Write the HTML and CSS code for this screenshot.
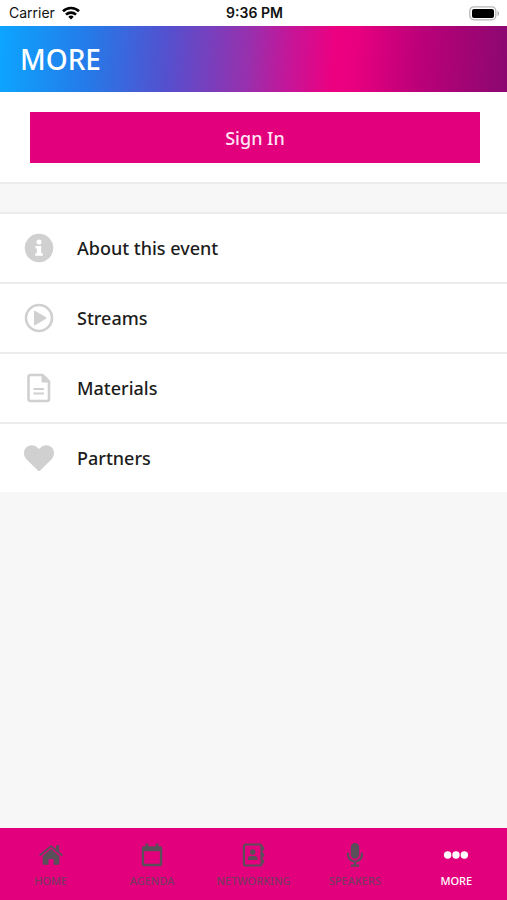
FILE: index.html
```html
<!DOCTYPE html>
<html lang="en">
<head>
<meta charset="utf-8">
<meta name="viewport" content="width=device-width, initial-scale=1">
<title>More</title>
<link rel="stylesheet" href="styles.css">
</head>
<body>
<div class="status">
  <div class="carrier"><span>Carrier</span>
    <svg width="18" height="14" viewBox="0 0 18 14" fill="none" stroke="#000" stroke-width="2.6" aria-hidden="true"><path d="M1 5.2a11.5 11.5 0 0 1 16 0M4 8.6a7.2 7.2 0 0 1 10 0"/><path d="M9 13.5L6.3 10.8a3.9 3.9 0 0 1 5.4 0z" fill="#000" stroke="none"/></svg>
  </div>
  <time>9:36 PM</time>
  <svg class="battery" width="31" height="15" viewBox="0 0 31 15" aria-hidden="true"><rect x=".8" y=".8" width="26" height="13" rx="4" fill="#fff" stroke="#b8b8b8" stroke-width="1.3"/><rect x="3" y="3" width="22" height="9" rx="2" fill="#000"/><path d="M28.5 5c2 .8 2 4.2 0 5z" fill="#aaa"/></svg>
</div>
<header class="title-bar"><h1>MORE</h1></header>
<main>
  <section class="account"><button class="sign-in" type="button">Sign In</button></section>
  <nav class="menu" aria-label="Event">
    <a href="#about"><svg viewBox="0 0 32 32" fill="#d0d0d0" aria-hidden="true"><circle cx="16" cy="16" r="14.3"/><g fill="#fff"><circle cx="16" cy="10" r="2.5"/><path d="M12.5 14h5.7v7.2h1.6v2.6h-7.6v-2.6h1.7v-4.6h-1.4z"/></g></svg>About this event</a>
    <a href="#streams"><svg viewBox="0 0 32 32" fill="#d0d0d0" aria-hidden="true"><circle cx="16" cy="16" r="13" fill="none" stroke="#d0d0d0" stroke-width="2.6"/><path d="M11 9.5q0-1.2 1-.7l11 6.4q1 .8 0 1.6l-11 6.4q-1 .5-1-.7z"/></svg>Streams</a>
    <a href="#materials"><svg viewBox="0 0 32 32" fill="none" stroke="#d0d0d0" stroke-width="2.6" aria-hidden="true"><path d="M7.5 3H19.500L26 9.500V27q0 2-2 2H7.500q-2 0-2-2V5q0-2 2-2z" stroke-linejoin="round"/><path d="M19 3v7h7z" fill="#d0d0d0" stroke-width="1"/><path d="M10.500 17h10.500M10.500 21.500h10.500" stroke-width="2.200"/></svg>Materials</a>
    <a href="#partners"><svg viewBox="0 0 32 32" fill="#d0d0d0" aria-hidden="true"><path d="M14.9 28.5L3.400 17.200C-.3 13.200.3 7 4.500 4.500c3.500-2.100 7.800-1.300 10.300 1.400L16 7l1.200-1.100c2.500-2.700 6.800-3.500 10.300-1.400 4.200 2.500 4.800 8.700 1.100 12.700L17.100 28.500q-1.100 1-2.200 0z"/></svg>Partners</a>
  </nav>
</main>
<nav class="tabs" aria-label="Main">
  <a href="#home"><svg viewBox="0 0 28 28" fill="currentColor" aria-hidden="true"><path d="M14 7.500l9 7.500v8.500q0 .9-.9.900h-5.300v-6.200h-5.400v6.200H5.900q-.9 0-.9-.9V15z"/><path d="M1.800 14.500L14 4.400l12.200 10.100" fill="none" stroke="currentColor" stroke-width="2"/><path d="M19.500 3.500h3.300v8l-3.300-2.700z"/></svg>HOME</a>
  <a href="#agenda"><svg viewBox="0 0 28 28" fill="currentColor" aria-hidden="true"><path fill-rule="evenodd" d="M7 1.500h3v3h8v-3h3v3h2q2 0 2 2V24q0 2-2 2H5q-2 0-2-2V6.500q0-2 2-2h2zM5.500 10v13q0 .5.500.5h16q.5 0 .5-.5V10z"/></svg>AGENDA</a>
  <a href="#networking"><svg viewBox="0 0 28 28" fill="currentColor" aria-hidden="true"><rect x="4.200" y="2.700" width="19" height="22.600" rx="2" fill="none" stroke="currentColor" stroke-width="2.400"/><circle cx="13.700" cy="10.700" r="3"/><path d="M8.500 19.500v-1.300q0-3 3-3h4.400q3 0 3 3v1.300zM23 5h3v4h-3zM23 12h3v4h-3zM23 19h3v4h-3z"/></svg>NETWORKING</a>
  <a href="#speakers"><svg viewBox="0 0 28 28" fill="currentColor" aria-hidden="true"><rect x="9.500" y="1" width="9" height="17" rx="4.500"/><path d="M6.500 11.500v2a7.500 7.500 0 0 0 15 0v-2M14 21v4M9.500 25.500h9" fill="none" stroke="currentColor" stroke-width="2.400"/></svg>SPEAKERS</a>
  <a class="active" href="#more" aria-current="page"><svg viewBox="0 0 28 28" fill="currentColor" aria-hidden="true"><circle cx="5" cy="14" r="4"/><circle cx="14" cy="14" r="4"/><circle cx="23" cy="14" r="4"/></svg>MORE</a>
</nav>
</body>
</html>
```

FILE: styles.css
```css
* { box-sizing: border-box; }
body {
  margin: 0;
  min-height: 100vh;
  display: flex;
  flex-direction: column;
  background: #f7f7f7;
  color: #1c1c1c;
  font-family: "Noto Sans", sans-serif;
}
a { color: inherit; text-decoration: none; }
.status {
  display: grid;
  grid-template-columns: 1fr auto 1fr;
  align-items: center;
  height: 26px;
  padding: 0 7px 0 9px;
  background: #fff;
  color: #111;
  font: 14px/26px Inter, sans-serif;
}
.carrier { display: flex; align-items: center; gap: 7px; }
.status time { font-weight: 600; }
.battery { justify-self: end; }
.title-bar {
  display: flex;
  align-items: center;
  height: 66px;
  padding: 0 20px;
  background: linear-gradient(93deg, #0ca5ff 0%, #2679e8 18%, #5450ce 33%, #9830ad 49%, #c51598 57%, #ed0080 66%, #e80080 70%, #bd0079 82%, #8b0870 100%);
}
h1 {
  margin: 0;
  color: #fff;
  font-size: 28px;
  font-weight: 500;
  line-height: 36px;
}
.account {
  padding: 20px 27px 19px 30px;
  background: #fff;
  border-bottom: 2px solid #ececec;
}
.sign-in {
  display: block;
  width: 100%;
  height: 51px;
  border: 0;
  background: #e3007d;
  color: #ffe6f5;
  font: 500 18px/24px "Noto Sans", sans-serif;
}
.menu { margin-top: 28px; background: #fff; }
.menu a {
  display: flex;
  align-items: center;
  gap: 22px;
  height: 70px;
  padding: 0 23px;
  border-top: 2px solid #ececec;
  font-size: 18px;
  font-weight: 500;
}
.menu svg { width: 32px; height: 32px; }
.tabs {
  display: grid;
  grid-template-columns: repeat(5, 1fr);
  margin-top: auto;
  height: 72px;
  background: #e3007d;
  color: #783961;
}
.tabs a {
  display: flex;
  flex-direction: column;
  align-items: center;
  gap: 5px;
  padding-top: 14px;
  font-size: 11px;
  font-weight: 500;
  line-height: 16px;
}
.tabs svg { width: 26px; height: 26px; color: #59505a; }
.tabs .active, .tabs .active svg { color: #fff; }
```
